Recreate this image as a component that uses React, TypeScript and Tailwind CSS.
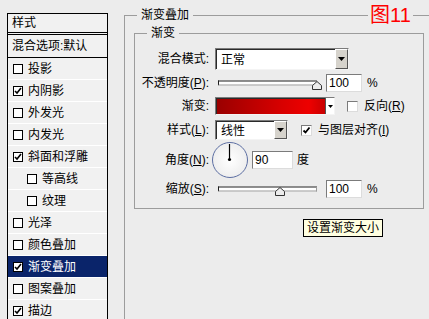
import type { ReactNode } from 'react'

/* ── small pieces ─────────────────────────────────────────────── */

function Box({ checked = false }: { checked?: boolean }) {
  return (
    <span className="w-[11px] h-[11px] shrink-0 bg-white border border-[#7b7b7b] border-b-[#dcdcdc] border-r-[#dcdcdc] flex items-center justify-center">
      {checked && (
        <svg width="9" height="9" viewBox="0 0 9 9">
          <path d="M1.5 4.5 L3.5 6.5 L7.5 1.5" fill="none" stroke="#000" strokeWidth="1.8" />
        </svg>
      )}
    </span>
  )
}

function ListBox({ checked = false }: { checked?: boolean }) {
  return (
    <span className="w-[10px] h-[10px] shrink-0 bg-white border border-black flex items-center justify-center">
      {checked && (
        <svg width="8" height="8" viewBox="0 0 8 8">
          <path d="M1 4 L3 6 L7 1" fill="none" stroke="#000" strokeWidth="1.6" />
        </svg>
      )}
    </span>
  )
}

function Arrow() {
  return (
    <svg width="7" height="4" viewBox="0 0 7 4">
      <path d="M0 0 H7 L3.5 4 Z" fill="#000" />
    </svg>
  )
}

function Select({ value, w }: { value: string; w: string }) {
  return (
    <div className={`${w} h-full flex bg-white border border-[#7b7b7b] border-b-[#f4f4f4] border-r-[#f4f4f4]`}>
      <div className="flex-1 flex items-center pl-[4px] border-t border-l border-[#2a2a2a]">{value}</div>
      <div className="w-[13px] flex items-center justify-center bg-[#d6d3cc] border border-[#fff] border-b-[#555] border-r-[#555]">
        <Arrow />
      </div>
    </div>
  )
}

function Field({ value, w }: { value: string; w: string }) {
  return (
    <div className={`${w} h-[18px] bg-white border border-[#7b7b7b] border-b-[#dcdcdc] border-r-[#dcdcdc] flex items-center pl-[2px] font-['Liberation_Sans',sans-serif]`}>
      {value}
    </div>
  )
}

function Slider({ at }: { at: number }) {
  return (
    <div className="relative w-[108px] h-full">
      <div className="absolute left-[3px] right-[6px] top-1/2 -translate-y-1/2 h-[5px] bg-white border border-[#1e1e1e] border-b-[#9a9a9a] border-r-[#9a9a9a]" />
      <svg className="absolute top-1/2 -translate-y-[2px]" style={{ left: at - 4 }} width="10" height="9" viewBox="0 0 10 9">
        <path d="M0.5 8.5 V4.5 L5 0.5 L9.5 4.5 V8.5 Z" fill="#ececec" stroke="#333" />
      </svg>
    </div>
  )
}

function Row({ label, h, mt, children }: { label: ReactNode; h: string; mt: string; children: ReactNode }) {
  return (
    <div className={`flex items-center ${h} ${mt}`}>
      <div className="w-[74px] text-right whitespace-nowrap">{label}</div>
      <div className="ml-[6px] flex items-center h-full">{children}</div>
    </div>
  )
}

/* ── left list ────────────────────────────────────────────────── */

const items = [
  { name: '投影', on: false },
  { name: '内阴影', on: true },
  { name: '外发光', on: false },
  { name: '内发光', on: false },
  { name: '斜面和浮雕', on: true },
  { name: '等高线', on: false, sub: true },
  { name: '纹理', on: false, sub: true },
  { name: '光泽', on: false },
  { name: '颜色叠加', on: false },
  { name: '渐变叠加', on: true, active: true },
  { name: '图案叠加', on: false },
  { name: '描边', on: true },
]

function StyleList() {
  return (
    <div className="ml-[7px] mt-[13px] w-[101px] shrink-0 border border-black bg-[#f1f1f1] self-start">
      <div className="h-[21px] flex items-center pl-[4px] border-b-[3px] border-double border-black">样式</div>
      <div className="h-[23px] flex items-center pl-[4px] border-b border-black">混合选项:默认</div>
      {items.map((it) => (
        <div
          key={it.name}
          className={`h-[22px] flex items-center border-b border-[#ffffff] ${it.sub ? 'pl-[19px]' : 'pl-[5px]'} ${
            it.active ? 'bg-[#0a246a] text-white' : ''
          }`}
        >
          <ListBox checked={it.on} />
          <span className="ml-[5px]">{it.name}</span>
        </div>
      ))}
    </div>
  )
}

/* ── main ─────────────────────────────────────────────────────── */

export default function App() {
  return (
    <div className="relative w-[429px] h-[319px] overflow-hidden bg-[#ececec] flex text-[12px] leading-[14px] text-black font-['Liberation_Sans','Noto_Sans_CJK_SC',sans-serif]">
      <StyleList />

      <div className="relative ml-[16px] mt-[15px] w-[330px] h-[320px] shrink-0 border-l border-t border-[#9c9c9c]">
        <span className="absolute left-[12px] -top-[8px] px-[4px] bg-[#ececec]">渐变叠加</span>

        <div className="relative ml-[9px] mt-[17px] w-[290px] border border-[#9c9c9c] pt-[14px] pb-[10px]">
          <span className="absolute left-[12px] -top-[8px] px-[4px] bg-[#ececec]">渐变</span>

          <Row label="混合模式:" h="h-[22px]" mt="mt-0">
            <Select value="正常" w="w-[134px]" />
          </Row>

          <Row
            label={
              <>
                不透明度(<span className="underline">P</span>):
              </>
            }
            h="h-[18px]"
            mt="mt-[4px]"
          >
            <Slider at={101} />
            <div className="ml-[3px]">
              <Field value="100" w="w-[36px]" />
            </div>
            <span className="ml-[5px]">%</span>
          </Row>

          <Row label="渐变:" h="h-[18px]" mt="mt-[5px]">
            <div className="w-[120px] h-full flex border border-[#7b7b7b] border-b-[#f4f4f4] border-r-[#f4f4f4]">
              <div className="flex-1 border-t border-l border-[#2a2a2a] bg-[linear-gradient(to_right,#9a0000,#d80000_60%,#ee0000_85%,#c80000)]" />
              <div className="w-[9px] bg-white border-l border-[#555] flex items-center justify-center">
                <svg width="5" height="3" viewBox="0 0 5 3">
                  <path d="M0 0 H5 L2.5 3 Z" fill="#000" />
                </svg>
              </div>
            </div>
            <div className="ml-[12px]">
              <Box />
            </div>
            <span className="ml-[6px] whitespace-nowrap">
              反向(<span className="underline">R</span>)
            </span>
          </Row>

          <Row
            label={
              <>
                样式(<span className="underline">L</span>):
              </>
            }
            h="h-[20px]"
            mt="mt-[5px]"
          >
            <Select value="线性" w="w-[73px]" />
            <div className="ml-[13px]">
              <Box checked />
            </div>
            <span className="ml-[6px] whitespace-nowrap">
              与图层对齐(<span className="underline">I</span>)
            </span>
          </Row>

          <Row
            label={
              <>
                角度(<span className="underline">N</span>):
              </>
            }
            h="h-[36px]"
            mt="mt-[2px]"
          >
            <div className="-ml-[3px] w-[36px] h-[36px] rounded-full border-[1.5px] border-[#5d6fa3] bg-[radial-gradient(circle,#ffffff,#e8e8e8)] relative">
              <svg className="absolute inset-0" width="33" height="33" viewBox="0 0 33 33">
                <line x1="16.5" y1="16.5" x2="16.5" y2="1" stroke="#000" strokeWidth="1.2" />
                <circle cx="16.5" cy="16.5" r="1.6" fill="#000" />
              </svg>
            </div>
            <div className="ml-[4px]">
              <Field value="90" w="w-[41px]" />
            </div>
            <span className="ml-[4px]">度</span>
          </Row>

          <Row
            label={
              <>
                缩放(<span className="underline">S</span>):
              </>
            }
            h="h-[18px]"
            mt="mt-[2px]"
          >
            <Slider at={64} />
            <div className="ml-[3px]">
              <Field value="100" w="w-[36px]" />
            </div>
            <span className="ml-[5px]">%</span>
          </Row>
        </div>
      </div>

      {/* tooltip */}
      <div className="absolute left-[303px] top-[219px] h-[18px] px-[3px] flex items-center bg-[#ffffe1] border border-black whitespace-nowrap">
        设置渐变大小
      </div>

      {/* figure label */}
      <div className="absolute left-[368px] top-[4px] px-[2px] bg-[#ececec] text-[#ff0000] text-[20px] leading-[22px]">
        图11
      </div>
    </div>
  )
}
